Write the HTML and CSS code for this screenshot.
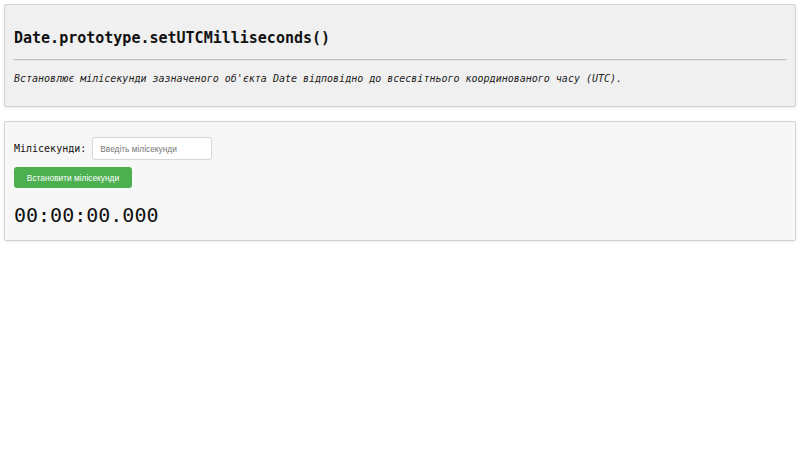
FILE: index.html
```html
<!DOCTYPE html>
<html lang="uk">
<head>
<meta charset="utf-8">
<title>Date.prototype.setUTCMilliseconds()</title>
<link rel="stylesheet" href="styles.css">
</head>
<body>
<section class="panel panel-info">
  <h1 class="title">Date.prototype.setUTCMilliseconds()</h1>
  <hr class="rule">
  <p class="desc">Встановлює мілісекунди зазначеного об'єкта Date відповідно до всесвітнього координованого часу (UTC).</p>
</section>
<section class="panel panel-demo">
  <div class="row">
    <label class="label" for="ms">Мілісекунди:</label>
    <input class="input" id="ms" type="text" placeholder="Введіть мілісекунди">
  </div>
  <button class="btn" type="button">Встановити мілісекунди</button>
  <div class="clock">00:00:00.000</div>
</section>
</body>
</html>
```
FILE: styles.css
```css
html, body {
  margin: 0;
  padding: 0;
  background: #ffffff;
}
body {
  padding: 4px;
  font-family: "DejaVu Sans Mono", monospace;
  color: #111;
}
.panel {
  border: 1px solid #d2d2d2;
  box-shadow: 0 1px 2px rgba(0,0,0,0.08);
  padding: 9px;
  border-radius: 2px;
}
.panel-info {
  background: #f0f0f0;
  padding-bottom: 21px;
}
.panel-demo {
  background: #f7f7f7;
  margin-top: 14px;
  padding-bottom: 13px;
}
.title {
  font-size: 15px;
  font-weight: bold;
  line-height: 18px;
  margin: 15px 0 0 0;
  color: #111;
}
.rule {
  border: none;
  border-top: 1px solid #bdbdbd;
  border-bottom: 1px solid #e4e4e4;
  margin: 12px 0 0 0;
  height: 0;
}
.desc {
  font-size: 10px;
  font-style: italic;
  line-height: 12px;
  margin: 12px 0 0 0;
  color: #222;
}
.row {
  display: flex;
  align-items: center;
  gap: 6px;
  margin-top: 6px;
}
.label {
  font-size: 10px;
  color: #111;
}
.input {
  box-sizing: border-box;
  width: 120px;
  height: 23px;
  border: 1px solid #d6d6d6;
  border-radius: 3px;
  background: #fff;
  padding: 0 7px;
  font-family: "Liberation Sans", Arial, sans-serif;
  font-size: 8.33px;
  color: #333;
}
.input::placeholder {
  color: #777;
}
.btn {
  display: block;
  margin-top: 7px;
  box-sizing: border-box;
  width: 118px;
  height: 21px;
  border: none;
  border-radius: 3px;
  background: #4caf50;
  color: #fff;
  font-family: "Liberation Sans", Arial, sans-serif;
  font-size: 8.33px;
  padding: 0;
}
.clock {
  font-size: 20px;
  line-height: 24px;
  margin-top: 15px;
  color: #111;
}
```
